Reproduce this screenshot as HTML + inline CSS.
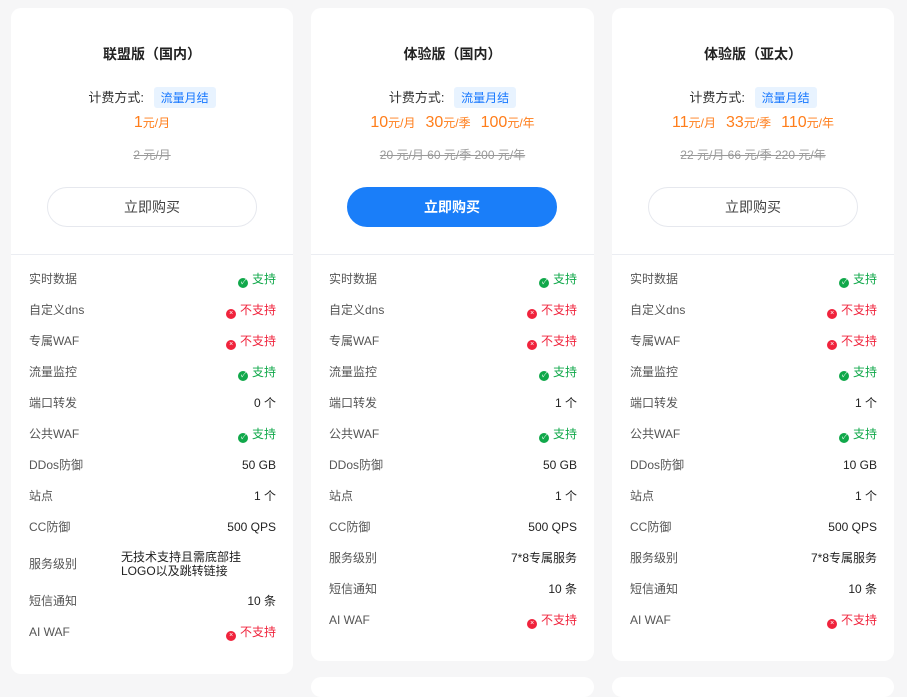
<!DOCTYPE html>
<html><head><meta charset="utf-8"><style>
*{margin:0;padding:0;box-sizing:border-box}
body{width:907px;height:681px;background:#f6f6f7;font-family:"Liberation Sans","Noto Sans CJK SC",sans-serif;position:relative;overflow:hidden;color:#333}
.card{position:absolute;top:8px;background:#fff;border-radius:10px;width:282px}
.c{position:absolute;left:0;width:100%;text-align:center}
.t{top:36px;font-size:14px;font-weight:bold;color:#222}
.m{top:79px;font-size:13px;color:#333}
.tag{display:inline-block;background:#e8f3ff;color:#1677ff;font-size:12px;padding:2px 7px;border-radius:3px;margin-left:6px}
.p{top:106px;color:#ff7d1a;font-size:16px;word-spacing:0}
.p small{font-size:12px}
.p span{margin:0 5px}
.o{top:138px;color:#999;font-size:12px;text-decoration:line-through}
.btn{position:absolute;top:179px;left:36px;width:210px;height:40px;border-radius:20px;border:1px solid #e6e8ee;text-align:center;line-height:38px;font-size:14px;color:#444}
.btn.b{background:#1a7ef9;border-color:#1a7ef9;color:#fff;font-weight:bold}
.hr{position:absolute;top:246px;left:0;width:100%;height:1px;background:#ebedf2}
.r{position:absolute;left:18px;right:17px;font-size:12px;color:#555;height:16px;line-height:16px}
.r b{position:absolute;right:0;top:0;font-weight:normal;color:#222;text-align:left}
.y{color:#10a84a!important}.n{color:#f0233c!important}
.i{display:inline-block;width:10px;height:10px;border-radius:50%;vertical-align:-1px;margin-right:4px;position:relative;color:#fff;font-size:7px;line-height:10px;text-align:center}
.y .i{background:#10a84a}.n .i{background:#f0233c}
</style></head><body>

<div class="card" style="left:11px;height:666px">
<div class="c t">联盟版（国内）</div>
<div class="c m">计费方式: <span class="tag">流量月结</span></div>
<div class="c p"><span>1<small>元/月</small></span></div>
<div class="c o">2 元/月</div>
<div class="btn">立即购买</div>
<div class="hr"></div>
<div class="r" style="top:263px">实时数据<b class="y"><i class="i">✓</i>支持</b></div>
<div class="r" style="top:294px">自定义dns<b class="n"><i class="i">×</i>不支持</b></div>
<div class="r" style="top:325px">专属WAF<b class="n"><i class="i">×</i>不支持</b></div>
<div class="r" style="top:356px">流量监控<b class="y"><i class="i">✓</i>支持</b></div>
<div class="r" style="top:387px">端口转发<b>0 个</b></div>
<div class="r" style="top:418px">公共WAF<b class="y"><i class="i">✓</i>支持</b></div>
<div class="r" style="top:449px">DDos防御<b>50 GB</b></div>
<div class="r" style="top:480px">站点<b>1 个</b></div>
<div class="r" style="top:511px">CC防御<b>500 QPS</b></div>
<div class="r" style="top:548px">服务级别<b style="right:7px;line-height:14px;top:-6px;width:148px">无技术支持且需底部挂LOGO以及跳转链接</b></div>
<div class="r" style="top:585px">短信通知<b>10 条</b></div>
<div class="r" style="top:616px">AI WAF<b class="n"><i class="i">×</i>不支持</b></div>
</div>

<div class="card" style="left:311px;width:283px;height:653px">
<div class="c t">体验版（国内）</div>
<div class="c m">计费方式: <span class="tag">流量月结</span></div>
<div class="c p"><span>10<small>元/月</small></span><span>30<small>元/季</small></span><span>100<small>元/年</small></span></div>
<div class="c o">20 元/月 60 元/季 200 元/年</div>
<div class="btn b">立即购买</div>
<div class="hr"></div>
<div class="r" style="top:263px">实时数据<b class="y"><i class="i">✓</i>支持</b></div>
<div class="r" style="top:294px">自定义dns<b class="n"><i class="i">×</i>不支持</b></div>
<div class="r" style="top:325px">专属WAF<b class="n"><i class="i">×</i>不支持</b></div>
<div class="r" style="top:356px">流量监控<b class="y"><i class="i">✓</i>支持</b></div>
<div class="r" style="top:387px">端口转发<b>1 个</b></div>
<div class="r" style="top:418px">公共WAF<b class="y"><i class="i">✓</i>支持</b></div>
<div class="r" style="top:449px">DDos防御<b>50 GB</b></div>
<div class="r" style="top:480px">站点<b>1 个</b></div>
<div class="r" style="top:511px">CC防御<b>500 QPS</b></div>
<div class="r" style="top:542px">服务级别<b>7*8专属服务</b></div>
<div class="r" style="top:573px">短信通知<b>10 条</b></div>
<div class="r" style="top:604px">AI WAF<b class="n"><i class="i">×</i>不支持</b></div>
</div>

<div class="card" style="left:612px;height:653px">
<div class="c t">体验版（亚太）</div>
<div class="c m">计费方式: <span class="tag">流量月结</span></div>
<div class="c p"><span>11<small>元/月</small></span><span>33<small>元/季</small></span><span>110<small>元/年</small></span></div>
<div class="c o">22 元/月 66 元/季 220 元/年</div>
<div class="btn">立即购买</div>
<div class="hr"></div>
<div class="r" style="top:263px">实时数据<b class="y"><i class="i">✓</i>支持</b></div>
<div class="r" style="top:294px">自定义dns<b class="n"><i class="i">×</i>不支持</b></div>
<div class="r" style="top:325px">专属WAF<b class="n"><i class="i">×</i>不支持</b></div>
<div class="r" style="top:356px">流量监控<b class="y"><i class="i">✓</i>支持</b></div>
<div class="r" style="top:387px">端口转发<b>1 个</b></div>
<div class="r" style="top:418px">公共WAF<b class="y"><i class="i">✓</i>支持</b></div>
<div class="r" style="top:449px">DDos防御<b>10 GB</b></div>
<div class="r" style="top:480px">站点<b>1 个</b></div>
<div class="r" style="top:511px">CC防御<b>500 QPS</b></div>
<div class="r" style="top:542px">服务级别<b>7*8专属服务</b></div>
<div class="r" style="top:573px">短信通知<b>10 条</b></div>
<div class="r" style="top:604px">AI WAF<b class="n"><i class="i">×</i>不支持</b></div>
</div>

<div class="card" style="left:311px;width:283px;top:677px;height:20px"></div>
<div class="card" style="left:612px;top:677px;height:20px"></div>
</body></html>
